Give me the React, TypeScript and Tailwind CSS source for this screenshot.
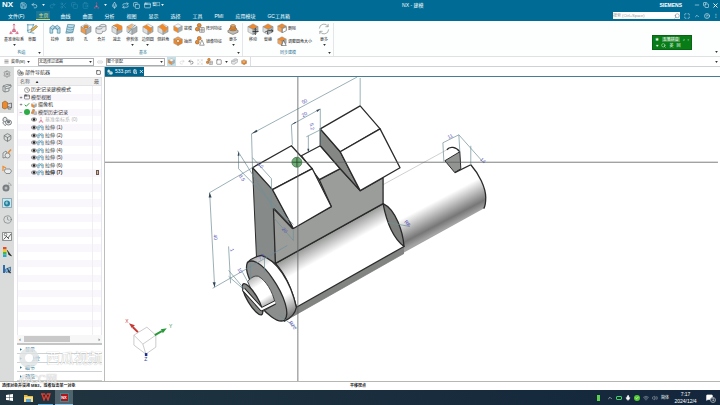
import type { ReactNode } from "react";
import {
  Box, ChevronUp, CircleHelp, ClipboardPaste, Clock, Copy, Expand, Link2, Maximize, Menu, Mic,
  Minus, Redo2, Save, Scissors, Search, Settings, Undo2, Wifi, Volume2, X, AppWindow, Repeat,
  Square, MessageSquare, Check,
} from "lucide-react";

type Kind =
  | "csys" | "sketch" | "extrude" | "revolve" | "hole" | "unite" | "subtract" | "trim" | "blend" | "chamfer"
  | "draft" | "shell" | "pattern" | "mirror" | "more" | "move" | "replace" | "delete" | "resize" | "refresh";

const ORANGE = "#ee8a2c";

function Body({ fill = "#dcdfe0", top = "#f4f5f5" }: { fill?: string; top?: string }) {
  return (
    <g stroke="#7d8386" strokeWidth=".5" strokeLinejoin="round">
      <path d="M1 4 6.500 1 12 4 6.500 7Z" fill={top} />
      <path d="M1 4v5.500L6.500 12.500V7Z" fill={fill} />
      <path d="M12 4v5.500L6.500 12.500V7Z" fill="#a9afb2" />
    </g>
  );
}

function Glyph({ kind, className = "size-3" }: { kind: Kind; className?: string }) {
  const art: Record<Kind, ReactNode> = {
    csys: (
      <g fill="none" stroke="#d0587c" strokeWidth=".8">
        <path d="M6.500 1v7L2 11.500M6.500 8l4.500 3.500M5.500 2.500l1-1.500 1 1.500M3 9l-1 2.500h3M10 9l1 2.500H8" />
        <circle cx="6.500" cy="8" r="1.500" fill="#d98aa2" />
      </g>
    ),
    sketch: (
      <g fill="none" strokeWidth=".8">
        <path d="M1 2h8M2 1v9M1 8c4 0 7-3 7-7M2 10c3 0 5 1 7 1" stroke="#3f8fae" />
        <path d="m5 9.500 1-3 5-4 1.500 1.500-5 4.500Z" fill="#e7b64a" stroke="#5a5240" strokeWidth=".5" />
      </g>
    ),
    extrude: (
      <g fill="#b9dbe8" stroke="#48829a" strokeWidth=".7" strokeLinejoin="round">
        <path d="M1 5 4 2.500 6.500 4 9 2.500 12 5v6H9V7L6.500 6 4 7v4H1Z" />
        <path d="M1 5 4 7 6.500 4 9 7l3-2" fill="none" />
      </g>
    ),
    revolve: (
      <g fill="#b9dbe8" stroke="#48829a" strokeWidth=".7">
        <path d="M4 1.500 11.500 2 9.500 10.500 2 11Z" />
        <path d="M3.500 4c3 1.500 5 1.500 7.500 0M3 6.500c3 1.500 5 1.500 7.500 0M2.500 9c3 1.500 5 1.500 7 0" fill="none" />
      </g>
    ),
    hole: <><Body fill="#ef9b4a" /><ellipse cx="6.500" cy="4" rx="2.600" ry="1.400" fill={ORANGE} stroke="#7a5220" strokeWidth=".5" /></>,
    unite: (
      <g fill="#e7e9ea" stroke="#6c7276" strokeWidth=".7">
        <path d="M1 5.500v4.500c0 1.500 6 2.500 7 .5V9c2 .5 4-.5 4-1.500V3c0-2-6-2-7 0v1C3 3.800 1 4.500 1 5.500Z" />
        <path d="M1 5.500c1 1.500 6 1.500 7 0M5 3.500c1 1 6 1 7-.5" fill="none" />
      </g>
    ),
    subtract: <><Body /><path d="M2 2.500 7 1l5 2v4L7 8.500V5Z" fill={ORANGE} /><path d="M2 2.500 7 5v3.500" fill="none" stroke="#8a5a20" strokeWidth=".5" /></>,
    trim: <><Body /><path d="M1 4 6.500 1 8 3 3 9Z" fill={ORANGE} opacity=".6" /><path d="m2 11 8-9" stroke="#48829a" strokeWidth=".8" /></>,
    blend: <><Body /><path d="M1 4 5 2l6 4-2 5.500L7 8Z" fill={ORANGE} /></>,
    chamfer: <><Body /><path d="m2 3.500 4-2.500 6 5-4 4Z" fill={ORANGE} /></>,
    draft: <><Body /><path d="M1 4 6.500 7v5.500L1 9.500Z" fill={ORANGE} /></>,
    shell: <><Body fill={ORANGE} top="#f0a050" /><path d="M12 4v5.500L6.500 12.500V7Z" fill="#e08028" /><circle cx="6.500" cy="6.500" r="2" fill="#fbe3c8" stroke="#8a5a20" strokeWidth=".6" /></>,
    pattern: <g stroke="#6b4a24" strokeWidth=".6"><circle cx="5.500" cy="3" r="2.500" fill={ORANGE} /><circle cx="3" cy="8" r="2.500" fill={ORANGE} /><path d="M6 6h6v6H6ZM9 6v6M6 9h6" fill="#fff" stroke="#333" /></g>,
    mirror: <g stroke="#6b4a24" strokeWidth=".6"><circle cx="5.500" cy="3" r="2.500" fill={ORANGE} /><circle cx="3" cy="8" r="2.500" fill={ORANGE} /><path d="m9 5 3 7H6Z" fill="#fff" stroke="#333" /></g>,
    more: <g stroke="#6b5a40" strokeWidth=".6"><path d="M1 8l5.500-2L12 8v2l-5.500 2.500L1 10Z" fill="#b8bdc0" /><ellipse cx="6.500" cy="6.500" rx="4" ry="2" fill={ORANGE} /><path d="M4 3v3c0 1 5 1 5 0V3" fill={ORANGE} /><ellipse cx="6.500" cy="3" rx="2.500" ry="1.300" fill="#f6b26c" /></g>,
    move: <><Body top={ORANGE} /><path d="M9 6v6.500M6 9.200h6.500M8 7l1-1 1 1M8 11.500l1 1 1-1" stroke="#222" strokeWidth=".8" fill="none" /></>,
    replace: <><Body top={ORANGE} /><path d="M3 10l4-2 5 .500M10 7l2 1.500L10 10M6 12V9" stroke="#333" strokeWidth=".8" fill="none" /></>,
    delete: <><Body top={ORANGE} fill="#f1a35a" /><path d="M7 7.500 12 5v5l-5 2.500Z" fill="#fff" stroke="#444" strokeWidth=".6" /></>,
    resize: <><Body top={ORANGE} fill="#f1a35a" /><path d="m8.500 5.500 3.500 7H6Z" fill="#fff" stroke="#333" strokeWidth=".7" /></>,
    refresh: <g fill="none" stroke="#888" strokeWidth=".7"><path d="M1.500 6a5 5 0 0 1 9.500-2M11.500 7a5 5 0 0 1-9.500 2M11 1v3H8M2 12V9h3" /></g>,
  };
  return <svg viewBox="0 0 13 13" className={`${className} shrink-0`} aria-hidden="true">{art[kind]}</svg>;
}

function Caret({ className = "text-[#333]" }: { className?: string }) {
  return (
    <svg viewBox="0 0 4 3" className={`h-[2px] w-[3px] shrink-0 ${className}`} aria-hidden="true">
      <path d="M0 0h4L2 3Z" fill="currentColor" />
    </svg>
  );
}

function Tool({ kind, label, caret }: { kind: Kind; label: string; caret?: boolean }) {
  return (
    <button className="flex min-w-0 flex-col items-center whitespace-nowrap">
      <Glyph kind={kind} />
      <span className="mt-[2px] text-[4px] leading-[5px]">{label}</span>
      {caret && <Caret className="mt-[2px] text-[#333]" />}
    </button>
  );
}

function SmallTool({ kind, label }: { kind: Kind; label: string }) {
  return (
    <button className="flex items-center gap-[1px] whitespace-nowrap text-[4px] leading-[5px]">
      <Glyph kind={kind} className="size-[10px]" />
      {label}
    </button>
  );
}

function Group({ title, children, className }: { title: string; children: ReactNode; className: string }) {
  return (
    <section className={`mt-[2px] flex shrink-0 flex-col border-r border-[#e4e6e7] ${className}`}>
      <div className="flex flex-1 items-start">{children}</div>
      <div className="relative mb-[1px] text-center text-[4px] leading-[5px] text-[#28718e]">
        {title}
        <span className="absolute right-[2px] top-[2px] flex"><Caret /></span>
      </div>
    </section>
  );
}

const tabs = ["曲线", "曲面", "分析", "视图", "显示", "选择", "工具", "PMI", "应用模块", "GC工具箱"];

function Header() {
  const faded = "size-[7px] shrink-0 text-[#2f8bb0]";
  const lit = "size-[7px] shrink-0 text-[#dcebf2]";
  return (
    <header className="bg-[#006c96] text-white">
      <div className="flex h-[10px] items-center">
        <div className="flex w-[166px] shrink-0 items-center gap-[4px] pl-[2px]">
          <strong className="mr-[3px] text-[8px] leading-none">NX</strong>
          <Save className={lit} />
          <Undo2 className={lit} />
          <Caret className="text-white" />
          <Redo2 className={faded} />
          <Scissors className={faded} />
          <Copy className={faded} />
          <ClipboardPaste className={faded} />
          <Glyph kind="csys" className="size-[7px]" />
          <Caret className="text-white" />
          <Mic className={lit} />
          <Repeat className={lit} />
          <Copy className={lit} />
          <div className="flex items-center gap-[1px] whitespace-nowrap text-[4px] leading-none">
            <AppWindow className={lit} />窗口<Caret className="text-white" />
          </div>
        </div>
        <h1 className="flex-1 text-center text-[5px] leading-none">NX - 建模</h1>
        <strong className="mr-[12px] text-[5px] leading-none">SIEMENS</strong>
        <div className="flex items-center gap-[3px] pr-[1px]">
          <button aria-label="最小化"><Minus className="size-[6px]" /></button>
          <button aria-label="还原"><Copy className="size-[6px]" /></button>
          <button aria-label="关闭"><X className="size-[7px]" strokeWidth={3} /></button>
        </div>
      </div>
      <div className="flex h-[11px] items-center">
        <nav className="flex items-center gap-[12px] whitespace-nowrap pl-[8px] text-[5px] leading-[8px]">
          <button className="mr-[2px]">文件(F)</button>
          <button className="-mx-[2px] border-b border-[#c7d36a] bg-[#1b7795] px-[2px] text-[#e6e58a]">主页</button>
          {tabs.map((t) => <button key={t}>{t}</button>)}
        </nav>
        <div className="ml-auto flex items-center gap-[4px] pr-[2px]">
          <label className="flex h-[7px] w-[67px] items-center bg-white text-[#64727a]">
            <input aria-label="搜索" placeholder="搜索 (Ctrl+Space)" className="min-w-0 flex-1 text-[4px] leading-none placeholder:text-[#93999c]" />
            <Search className="size-[6px] -scale-x-100" />
          </label>
          <Maximize className="size-[6px]" />
          <ChevronUp className="size-[6px]" />
          <CircleHelp className="size-[6px]" />
          <span className="w-[4px] text-center text-[6px] leading-none">⁝</span>
        </div>
      </div>
    </header>
  );
}

function Ribbon() {
  return (
    <div className="relative flex h-[36px] shrink-0 border-b border-[#dfe1e2] bg-[#fdfefe] text-[#222]">
      <Group title="构造" className="w-[44px]">
        <div className="flex w-full justify-between pl-[4px] pr-[5px]">
          <Tool kind="csys" label="基准坐标系" caret />
          <Tool kind="sketch" label="草图" />
        </div>
      </Group>
      <Group title="基本" className="w-[199px]">
        <div className="ml-[3px] grid w-[124px] shrink-0 grid-cols-8">
          <Tool kind="extrude" label="拉伸" />
          <Tool kind="revolve" label="旋转" />
          <Tool kind="hole" label="孔" />
          <Tool kind="unite" label="合并" />
          <Tool kind="subtract" label="减去" />
          <Tool kind="trim" label="修剪体" caret />
          <Tool kind="blend" label="边倒圆" caret />
          <Tool kind="chamfer" label="倒斜角" />
        </div>
        <div className="ml-[2px] flex flex-col gap-[3px]">
          <SmallTool kind="draft" label="拔模" />
          <SmallTool kind="shell" label="抽壳" />
        </div>
        <div className="ml-[3px] mr-auto flex flex-col gap-[3px]">
          <SmallTool kind="pattern" label="阵列特征" />
          <SmallTool kind="mirror" label="镜像特征" />
        </div>
        <div className="pr-[3px]"><Tool kind="more" label="更多" caret /></div>
      </Group>
      <Group title="同步建模" className="w-[91px]">
        <div className="flex gap-[3px] pl-[4px]">
          <Tool kind="move" label="移动" />
          <Tool kind="replace" label="替换" />
        </div>
        <div className="ml-[3px] mr-auto flex flex-col gap-[3px]">
          <SmallTool kind="delete" label="删除" />
          <SmallTool kind="resize" label="调整圆角大小" />
        </div>
        <div className="pr-[3px]"><Tool kind="refresh" label="更多" caret /></div>
      </Group>
      <div className="ml-auto flex items-end pb-[3px] pr-[2px]"><Caret /></div>
      <div className="absolute right-[28px] top-[14px] flex h-[15px] w-[40px] flex-col justify-around border border-[#0a6415] bg-[#087d17] px-[2px] text-[4px] leading-[5px] text-white">
        <div className="flex items-center justify-between"><span>★</span><span className="bg-[#3f9848] px-[1px]">五笔拼音</span><span>♪</span><span>▫</span></div>
        <div className="flex items-center gap-[3px] pl-[1px]"><span>♥</span><Search className="size-[5px]" /><span>英</span><span>回</span></div>
      </div>
    </div>
  );
}

function Filter({ label, value, className }: { label: string; value: string; className: string }) {
  return (
    <div className={`flex h-[8px] shrink-0 items-center border border-[#a9adaf] bg-white pr-[1px] ${className}`}>
      <select aria-label={label} className="h-[6px] min-w-0 flex-1 appearance-none text-[4px] leading-[6px]">
        <option>{value}</option>
      </select>
      <Caret />
    </div>
  );
}

function SelectionBar() {
  return (
    <div className="flex h-[10px] shrink-0 items-center border-b border-[#cfd2d3] bg-white pr-[2px] text-[#222]">
      <button className="flex w-[38px] shrink-0 items-center gap-[2px] pl-[4px] text-[4px] leading-none">
        <Menu className="size-[5px]" />菜单(M)<Caret />
      </button>
      <Filter label="选择过滤器" value="无选择过滤器" className="w-[56px]" />
      <Link2 className="mx-[3px] size-[6px] text-[#bbb]" />
      <Filter label="选择范围" value="整个装配" className="w-[59px]" />
      <div className="ml-[2px] flex items-center gap-[3px] border-r border-[#dcdfe0] pr-[3px]">
        <span className="flex size-[9px] items-center justify-center bg-[#c4e0e8]"><Glyph kind="draft" className="size-[7px]" /></span>
        <Redo2 className="size-[6px] text-[#ccc]" />
        <Undo2 className="size-[6px] text-[#333]" />
        <Expand className="size-[6px] text-[#ccc]" />
        <Glyph kind="pattern" className="size-[7px]" />
        <Square className="size-[6px] text-[#444]" />
        <Caret />
        <Glyph kind="unite" className="size-[7px]" />
        <Glyph kind="shell" className="size-[6px]" />
      </div>
      <span className="ml-auto flex"><Caret /></span>
    </div>
  );
}

function ResourceBar() {
  const icon = "size-[9px] text-[#676d70]";
  const items: [string, ReactNode][] = [
    ["装配导航器", (
      <svg viewBox="0 0 10 10" className="size-[10px]"><g fill="#e4e7e6" stroke="#666c6e" strokeWidth=".7"><path d="M1 3 5 1.500 9 2v2L7 5v3L3 9 1 8Z" /><path d="M1 3l2 1 6-2M3 4v5M3 6l4-1" fill="none" /></g></svg>
    )],
    ["约束导航器", (
      <svg viewBox="0 0 10 10" className="size-[10px]"><path d="M.5 2.500 3 1l2.500 1.500v5L3 9 .5 8Z" fill={ORANGE} stroke="#8a5a20" strokeWidth=".6" /><path d="M5.500 4 9.500 3v5L6 6.500v2.500l3 0" fill="#cfd3d4" stroke="#555" strokeWidth=".7" /></svg>
    )],
    ["部件导航器", <PartIcon className="size-[10px]" color="#5c6265" />],
    ["重用库", <Box className={icon} />],
    ["视图管理器", (
      <svg viewBox="0 0 10 10" className="size-[10px]"><g stroke="#666c6e" strokeWidth=".7" fill="#e4e7e6"><path d="M1 4l3-2 1 2v4l-4 1Z" /><circle cx="5.500" cy="6.500" r="2.500" /></g><path d="m6 4 3-3.500" stroke={ORANGE} strokeWidth="1.500" /></svg>
    )],
    ["加工", (
      <svg viewBox="0 0 10 10" className="size-[10px]"><path d="M3 4h5l1.500 2L8 8.500H4L2.500 6.500Z" fill="#eceeee" stroke="#666c6e" strokeWidth=".7" /><path d="M1 6V1.500L4 3" fill="none" stroke={ORANGE} strokeWidth="1.200" /></svg>
    )],
    ["材料", (
      <svg viewBox="0 0 10 10" className="size-[10px]"><circle cx="4" cy="6" r="3.500" fill="#777d80" /><circle cx="4" cy="6" r="1.500" fill="#bbb" /><path d="M6 1c2 0 3 1 3 3M6 3c1 0 1 0 1 1" fill="none" stroke="#888" strokeWidth=".7" /></svg>
    )],
    ["浏览器", (
      <svg viewBox="0 0 10 10" className="size-[10px]"><path d="M.5.500h9v9h-9Z" fill="#cfe6ed" stroke="#6f97a6" strokeWidth=".7" /><circle cx="5" cy="5.500" r="3" fill="#23819f" /><path d="M3 5l2-2 1 2-1 2Z" fill="#90c9d8" /></svg>
    )],
    ["历史记录", <Clock className={icon} strokeWidth={1.5} />],
    ["工艺", (
      <svg viewBox="0 0 10 10" className="size-[10px]"><path d="M.5 1.500h9v8h-9Z" fill="#f3f4f4" stroke="#666c6e" strokeWidth=".7" /><path d="m1.500 8.500 3-3 1.500 1.500 3-4M2 3l5 5" stroke="#444" strokeWidth=".8" fill="none" /><circle cx="3.500" cy="3.500" r="1.300" fill="#fff" stroke="#444" strokeWidth=".6" /></svg>
    )],
    ["可视化", (
      <svg viewBox="0 0 10 10" className="size-[10px]"><path d="M1 0h3.500v2.500H1Z" fill="#e64a2e" /><path d="M1 2.500h3.500V5H1Z" fill="#f0c928" /><path d="M1 5h3.500v2.500H1Z" fill="#45b649" /><path d="M1 7.500h3.500V10H1Z" fill="#2aa6c8" /><path d="m5 3 4.500 6-3-1.500" fill="#222" stroke="#222" strokeWidth=".6" /></svg>
    )],
    ["角色", (
      <svg viewBox="0 0 10 10" className="size-[10px]"><path d="M1 1h2v8H1Z" fill="#2f6cab" /><path d="M3 5.500 8.500 3v4L4 8.500Z" fill="#8ab8dc" stroke="#2f5e8e" strokeWidth=".7" /><path d="m5 4 4 5-2.500-.5" fill="#234" stroke="#234" strokeWidth=".5" /></svg>
    )],
  ];
  return (
    <aside className="w-[14px] shrink-0 bg-[#d9dcda]">
      <button aria-label="设置" className="flex h-[13px] w-full items-center justify-center"><Settings className="size-[8px] text-[#777]" /></button>
      <div className="grid h-[197px] grid-rows-12">
        {items.map(([name, art], i) => (
          <button key={name} aria-label={name} className={i === 2 ? "flex items-center justify-center bg-white" : "flex items-center justify-center"}>{art}</button>
        ))}
      </div>
    </aside>
  );
}

function PartIcon({ className = "size-[7px]", color = "#8a9094" }: { className?: string; color?: string }) {
  return (
    <svg viewBox="0 0 10 10" className={`${className} shrink-0`} aria-hidden="true">
      <g fill="#e6e8e9" stroke={color} strokeWidth=".8">
        <path d="M1 2.500 3 1l2 1.500V5L3 6 1 5Z" /><ellipse cx="6.500" cy="6.500" rx="3" ry="2.500" /><ellipse cx="6.500" cy="6" rx="1.200" ry=".8" fill={color} /><path d="M1 6c0 2 1 3 3 3.500" fill="none" />
      </g>
    </svg>
  );
}

function Eye() {
  return (
    <svg viewBox="0 0 6 5" className="h-[5px] w-[6px] shrink-0"><path d="M0 2.500C2 .3 4 .3 6 2.500 4 4.700 2 4.700 0 2.500Z" fill="none" stroke="#333" strokeWidth=".6" /><circle cx="3" cy="2.500" r="1.300" fill="#222" /></svg>
  );
}

function Twist({ open }: { open?: boolean }) {
  return <span className="w-[4px] shrink-0 text-center text-[5px] leading-none text-[#444]">{open ? "−" : "+"}</span>;
}

function Navigator() {
  const top: ReactNode[] = [
    <><span className="w-[4px]" /><Clock className="size-[6px] text-[#555]" />历史记录建模模式</>,
    <><Twist /><AppWindow className="size-[6px] text-[#333]" />模型视图</>,
    <><Twist /><Check className="size-[6px] text-[#28a53a]" strokeWidth={4} /><Glyph kind="draft" className="size-[6px]" />摄像机</>,
    <><Twist open /><span className="size-[6px] rounded-full bg-[#2dab46]" /><Glyph kind="pattern" className="size-[6px]" />模型历史记录</>,
    <span className="flex items-center gap-[1px] pl-[12px] text-[#b4b4b4]"><Eye /><Glyph kind="csys" className="size-[6px]" />基准坐标系 (0)</span>,
  ];
  const features = Array.from({ length: 7 }, (_, i) => (
    <span className={i === 6 ? "flex items-center pl-[12px] font-bold" : "flex items-center pl-[12px]"}>
      <Eye /><Glyph kind="extrude" className="mr-[1px] size-[7px]" />拉伸 ({i + 1})
    </span>
  ));
  const rows = [...top, ...features];
  return (
    <section className="relative flex w-[91px] shrink-0 flex-col border-r border-[#b9bdbe] bg-white pl-[3px] pr-[2px] text-[#333]">
      <h2 className="flex h-[10px] shrink-0 items-center gap-[1px] text-[5px] font-normal leading-none">
        <PartIcon color="#555" />部件导航器
        <Square className="ml-auto mr-[1px] size-[5px]" strokeWidth={3} />
      </h2>
      <div className="flex h-[9px] shrink-0 items-center border border-[#e3e3e6] bg-[#f1f1f2] pl-[2px] text-[5px] leading-none text-[#666]">
        名称<span className="ml-[5px] text-[4px] text-[#111]">▲</span><span className="ml-auto mr-[2px]">最</span>
      </div>
      <div className="relative flex-1 border-x border-[#e8e6ee]">
        <ul className="grid h-full grid-rows-[repeat(33,minmax(0,1fr))] text-[5px] leading-none">
          {Array.from({ length: 33 }, (_, i) => (
            <li key={i} className="flex items-center whitespace-nowrap even:bg-[#f9f7fc]">
              <span className="flex flex-1 items-center gap-[1px] pl-[1px]">{rows[i]}</span>
              <span className="flex h-full w-[9px] items-center justify-center border-l border-[#f0eef4]">
                {i === 11 && <span className="h-[5px] w-[3px] border border-[#6c5a50] bg-[#d8b79a]" />}
              </span>
            </li>
          ))}
        </ul>
      </div>
      <div className="flex h-[8px] shrink-0 items-center bg-[#f7f7f7] px-[2px] text-[6px] leading-none">
        ‹<span className="ml-[3px] h-[6px] w-[46px] bg-[#c9c9c9]" /><span className="ml-auto">›</span>
      </div>
      <div className="h-[2px] shrink-0 bg-[#c4c6c6]" />
      {["显示", "相依性", "细节", "预览"].map((s) => (
        <button key={s} className="flex h-[9px] shrink-0 items-center gap-[3px] border-b border-[#cfd2d3] pl-[3px] text-[5px] leading-none text-[#28718e]">
          <svg viewBox="0 0 3 4" className="h-[3px] w-[2px]"><path d="M0 0l3 2-3 2Z" fill="#28718e" /></svg>{s}
        </button>
      ))}
      <div className="pointer-events-none absolute -bottom-[4px] left-[5px] z-10">
        <div className="flex items-center gap-[7px] whitespace-nowrap text-[14px] leading-[18px] text-white [text-shadow:0_0_1px_#999]">
          <span className="flex size-[20px] items-center justify-center rounded-full bg-[#dfe2e4]/80">
            <span className="size-[8px] rounded-full bg-white" />
          </span>
          西瓜视频
        </div>
        <div className="mt-[5px] text-[11px] leading-[12px] text-white/80 [text-shadow:0_0_1px_#999]">@CC网</div>
      </div>
    </section>
  );
}

function Note({ x, y, turn, children }: { x: number; y: number; turn: number; children: ReactNode }) {
  return <text x={x} y={y} transform={`rotate(${turn} ${x} ${y})`} textAnchor="middle" fontSize="5" fill="#5450b4">{children}</text>;
}

function Model() {
  return (
    <svg viewBox="105 76 615 305" preserveAspectRatio="xMinYMin meet" className="absolute inset-0 size-full" role="img" aria-label="三维模型">
      <defs>
        <linearGradient id="shaft" gradientUnits="userSpaceOnUse" x1="420" y1="164" x2="452" y2="225">
          <stop offset="0" stopColor="#fff" /><stop offset=".58" stopColor="#fff" /><stop offset=".9" stopColor="#777" /><stop offset="1" stopColor="#a4a4a4" />
        </linearGradient>
        <linearGradient id="half" gradientUnits="userSpaceOnUse" x1="330" y1="233" x2="339" y2="249">
          <stop offset="0" stopColor="#969896" /><stop offset="1" stopColor="#fff" />
        </linearGradient>
        <linearGradient id="rim" gradientUnits="userSpaceOnUse" x1="256" y1="256" x2="292" y2="316">
          <stop offset="0" stopColor="#aaa" /><stop offset=".2" stopColor="#fff" /><stop offset=".7" stopColor="#fff" /><stop offset="1" stopColor="#777" />
        </linearGradient>
        <linearGradient id="stub" gradientUnits="userSpaceOnUse" x1="252" y1="278" x2="270" y2="306">
          <stop offset="0" stopColor="#bbb" /><stop offset=".3" stopColor="#fff" /><stop offset=".7" stopColor="#fff" /><stop offset="1" stopColor="#999" />
        </linearGradient>
      </defs>
      <g stroke="#2a2a2a" strokeWidth="1.300" strokeLinejoin="round">
        <path d="M384 184 446 149 456 172 472 164C480 173 487 187 487 197 487 203 487 205 485 208L405 252 384 203Z" fill="url(#shaft)" stroke="none" />
        <path d="M384 184 448 149" stroke="#c4c4c4" strokeWidth=".8" />
        <path d="M472 164C480 173 487 187 487 197 487 203 487 205 485 208" fill="none" />
        <path d="M446 160 461 151 462 168 456 172Z" fill="#929492" strokeWidth="1" />
        <path d="M456 172 472 164" /><path d="M448 149C451 145 457 146 461 151" fill="none" />
        <path d="M285 321 297 307 405 246V253Z" fill="#828482" stroke="none" />
        <path d="M285 321 405 253" stroke="#777" strokeWidth=".7" />
        <path d="M276 263 384 203 405 246 297 307C293 290 286 274 276 263Z" fill="url(#half)" />
        <path d="M384 203C397 209 404 232 405 246 392 236 387 219 384 203Z" fill="#7d807d" />
        <path d="M253 167 273 189 294 228 275 208 276 263 262 255 257 257Z" fill="#868a88" strokeWidth="1" />
        <path d="M274 208 293 228 332 206 320 179 341 168 361 190 384 177V203L276 263Z" fill="#9b9d9b" />
        <path d="M302 155 321 145 341 168 320 179Z" fill="#fff" />
        <path d="M321 128 341 151 361 190 341 168 321 145Z" fill="#858785" />
        <path d="M321 128 361 105 381 128 341 151Z" fill="#fff" />
        <path d="M341 151 381 128 401 167 361 190Z" fill="#fff" />
        <path d="M253 167 292 145 313 168 273 189Z" fill="#fff" />
        <path d="M273 189 313 168 332 206 294 228Z" fill="#fff" />
        <path d="M248 262C251 259 256 256 262 255 277 260 291 280 297 307 296 313 291 318 285 321Z" fill="url(#rim)" />
        <path d="M248 262C253 258 263 263 273 278 285 295 291 314 285 320 278 324 266 312 261 306L250 279C247 272 246 266 248 262Z" fill="#8b8e8c" />
        <path d="M248 281C252 277 255 275 259 276 266 280 273 290 276 304L262 312Z" fill="url(#stub)" strokeWidth=".8" />
        <ellipse cx="253" cy="299" rx="18" ry="5" transform="rotate(59 253 299)" fill="#858785" />
        <path d="M244 289 262 309 276 302" fill="none" stroke="#222" strokeWidth="4" />
        <path d="M244 289 262 309 276 302" fill="none" stroke="#fff" strokeWidth="2" />
      </g>
      <g fill="none" stroke="#6f8f97" strokeWidth=".7">
        <path d="M253 167 252 133 358 76M361 77V105M293 144 292 124 321 108V145M307 136 321 129M309 135V152" />
        <path d="M238 150 275 209M239 151V168L294 224M253 157 272 178V208M210 192 253 167M210 192 215 287M213 288 288 245M229 246 231 283M229 270 245 289M229 276 243 288M265 258V272M251 262V279" />
        <path d="M275 218 294 240V229M389 222 411 226M445 161 444 142 460 134 484 161M460 134 461 151M472 145V164M243 272 249 283M280 315 297 328" />
      </g>
      <g fill="#345">
        <path d="m252 133 5-4 1 2ZM292 124l4-3 1 1ZM309 152l-1-4h2ZM215 287l-2-5h3ZM210 192l-1 5h3ZM321 108l-4 1 1 2ZM239 151l-1 4h2Z" />
      </g>
      <Note x={306} y={102} turn={-30}>50</Note><Note x={306} y={115} turn={-30}>20</Note><Note x={311} y={126} turn={80}>5.2</Note>
      <Note x={241} y={178} turn={60}>8.5</Note><Note x={260} y={166} turn={45}>10</Note><Note x={214} y={237} turn={80}>40</Note>
      <Note x={284} y={231} turn={45}>20</Note><Note x={231} y={250} turn={70}>1</Note><Note x={239} y={271} turn={60}>10</Note>
      <Note x={263} y={258} turn={-30}>7.5</Note><Note x={292} y={326} turn={55}>R20</Note><Note x={407} y={224} turn={50}>R8</Note>
      <Note x={452} y={137} turn={-25}>11</Note><Note x={483} y={161} turn={45}>14</Note>
      <path d="M298.500 76V381M105 161.500H720" stroke="#5a5e60" strokeWidth=".8" />
      <circle cx="297.500" cy="161.500" r="5" fill="#4f9a58" fillOpacity=".8" stroke="#35693b" strokeWidth=".7" />
      <path d="M293 161.500h9M297.500 157v9" stroke="#294a2d" strokeWidth=".8" />
      <g fill="none" stroke="#b5b5b5" strokeWidth=".7">
        <path d="M134 335 147 327 156 335 143 344ZM134 335V345L146 354 143 344M146 354 156 347V335" />
      </g>
      <path d="M138 332 133 327" stroke="#c63a35" strokeWidth="2" /><path d="m129 323 6 2-3 3Z" fill="#c63a35" />
      <path d="M155 335 162 331" stroke="#299a3c" strokeWidth="2" /><path d="m167 328-6 1 2 4Z" fill="#299a3c" />
      <path d="M145 353h2.500v3H145Z" fill="#1d2c8c" />
      <g fontSize="5" textAnchor="middle"><text x="127" y="323" fill="#c44">X</text><text x="171" y="328" fill="#3a8a48">Y</text><text x="146" y="361" fill="#2b3ba0">Z</text></g>
    </svg>
  );
}

function Viewport() {
  return (
    <main className="flex min-w-0 flex-1 flex-col bg-white">
      <div className="flex h-[10px] shrink-0 border-b border-[#477c91]">
        <button className="flex w-[39px] items-center gap-[2px] bg-[#00638b] pl-[2px] text-[5px] leading-none text-white">
          <PartIcon className="size-[6px]" color="#9cc" />533.prt<Save className="size-[5px]" strokeWidth={3} /><X className="size-[5px]" strokeWidth={4} />
        </button>
      </div>
      <div className="relative flex-1"><Model /></div>
    </main>
  );
}

function Taskbar() {
  return (
    <footer className="flex h-[15px] shrink-0 items-center bg-linear-to-r from-[#20353f] to-[#13263c] text-white">
      <button aria-label="开始" className="flex w-[18px] justify-center">
        <svg viewBox="0 0 8 8" className="size-[7px]"><path d="M0 1.200 3.500.7v3H0ZM4 .6 8 0v3.700H4ZM0 4.200h3.500v3L0 6.800ZM4 4.200h4V8l-4-.6Z" fill="#fff" /></svg>
      </button>
      <button aria-label="文件资源管理器" className="flex w-[20px] justify-center">
        <svg viewBox="0 0 9 8" className="h-[8px] w-[9px]"><path d="M0 1h3l1 1h5v6H0Z" fill="#e9b93c" /><path d="M0 3h9v5H0Z" fill="#f8dc83" /><path d="M2 5h5v3H2Z" fill="#5aa5dc" /></svg>
      </button>
      <button aria-label="WPS" className="mr-[2px] flex h-full w-[15px] items-center justify-center border-b border-[#65aee0]">
        <svg viewBox="0 0 10 8" className="h-[8px] w-[10px]"><path d="M0 1h4M1 1l2 6 2-5 2 5 2-6H6" fill="none" stroke="#e43b2d" strokeWidth="1.300" /></svg>
      </button>
      <button aria-label="NX" className="flex h-full w-[18px] items-center justify-center border-b border-[#8fc6e8] bg-[#51646d]">
        <span className="flex size-[9px] items-end justify-center border border-[#3b8a91] bg-[#b2141c] text-[4px] font-bold leading-[6px]">NX</span>
      </button>
      <div className="ml-auto flex items-center gap-[3px] text-[4px] leading-none">
        <span className="mr-[4px] h-[6px] w-[3px] bg-[#5dd04d]" />
        <ChevronUp className="size-[6px]" />
        <span className="h-[4px] w-[6px] rounded-[1px] border border-[#3dd06b]" />
        <Mic className="size-[6px]" fill="white" />
        <span className="flex size-[6px] items-center justify-center rounded-full bg-[#52c932]"><Check className="size-[4px]" strokeWidth={4} /></span>
        <Wifi className="size-[6px] text-[#aab5bf]" />
        <Volume2 className="size-[6px] text-[#aab5bf]" />
        <span>简体</span>
      </div>
      <time className="ml-[4px] w-[25px] text-center text-[5px] leading-[7px]">7:17<br />2024/12/4</time>
      <button aria-label="通知" className="relative flex w-[22px] justify-center">
        <MessageSquare className="size-[7px]" fill="white" />
        <span className="absolute right-[4px] top-[3px] size-[6px] rounded-full border border-[#8c959e] bg-[#25374a] text-center text-[4px] leading-[4px]">1</span>
      </button>
    </footer>
  );
}

export default function App() {
  return (
    <div className="flex h-screen flex-col overflow-hidden bg-white font-['Liberation_Sans','Noto_Sans_CJK_SC',sans-serif]">
      <Header />
      <Ribbon />
      <SelectionBar />
      <div className="flex min-h-0 flex-1">
        <ResourceBar />
        <Navigator />
        <Viewport />
      </div>
      <div className="flex h-[9px] shrink-0 items-center border-t border-[#b5b8ae] bg-white text-[4px] font-bold leading-none text-[#222]">
        <p className="w-1/2 pl-[2px] pr-[10px]">选择对象并使用 MB3，或者双击某一对象</p>
        <p className="-ml-[10px]">平移视点</p>
      </div>
      <Taskbar />
    </div>
  );
}
